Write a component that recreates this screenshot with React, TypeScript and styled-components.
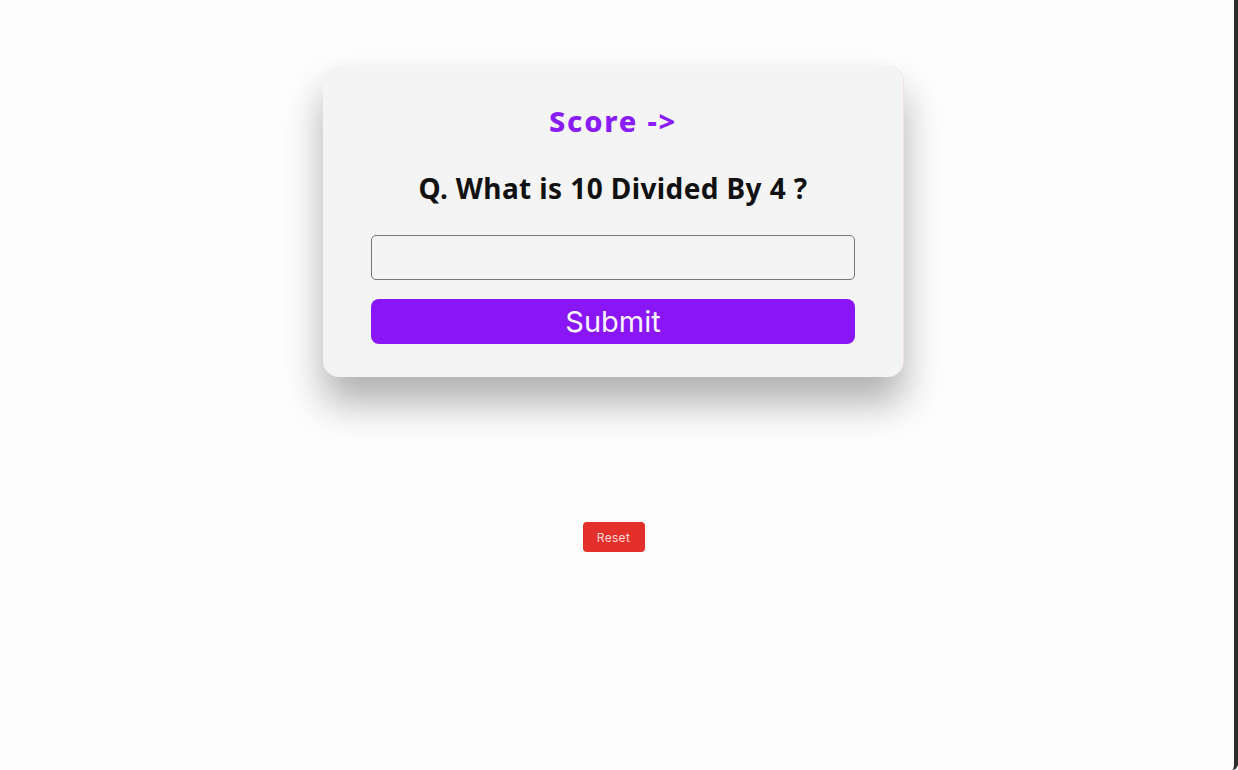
import React from "react";
import styled, { createGlobalStyle } from "styled-components";

const Global = createGlobalStyle`
  html, body { margin: 0; padding: 0; background: #fdfdfd; }
  body { font-family: "Noto Sans", sans-serif; }
`;

const Frame = styled.div`
  box-sizing: border-box;
  width: 1238px;
  height: 770px;
  background: #fdfdfd;
  border-right: 4px solid #2c2c2c;
  border-bottom-right-radius: 6px;
  padding: 65px 7px 0 0;
  display: flex;
  flex-direction: column;
  align-items: center;
`;

const Card = styled.div`
  box-sizing: border-box;
  width: 581px;
  height: 312px;
  background: #f4f4f4;
  border-radius: 16px;
  border-right: 1px solid #f1e4e8;
  box-shadow: 0 26px 38px rgba(0, 0, 0, 0.3);
  padding: 36px 48px 0 48px;
  display: flex;
  flex-direction: column;
  align-items: stretch;
`;

const Score = styled.h2`
  margin: 0;
  text-align: center;
  font-family: "Noto Sans", sans-serif;
  font-weight: 800;
  font-size: 29px;
  letter-spacing: 1.8px;
  line-height: 40px;
  color: #8a1cf5;
`;

const Question = styled.h3`
  margin: 27px 0 0 0;
  text-align: center;
  font-family: "Noto Sans", sans-serif;
  font-weight: 700;
  font-size: 28px;
  letter-spacing: 0.4px;
  line-height: 40px;
  color: #111;
`;

const Answer = styled.input`
  box-sizing: border-box;
  margin-top: 27px;
  height: 45px;
  width: 100%;
  border: 1.5px solid #767676;
  border-radius: 5px;
  background: #f4f4f4;
  outline: none;
  font-size: 20px;
`;

const Submit = styled.button`
  box-sizing: border-box;
  margin-top: 19px;
  height: 45px;
  width: 100%;
  border: none;
  border-radius: 8px;
  background: #8a16f5;
  color: #fbf3ff;
  font-family: "Inter", sans-serif;
  font-size: 29px;
  font-weight: 400;
  cursor: pointer;
`;

const Reset = styled.button`
  margin-top: 145px;
  width: 62px;
  height: 30px;
  border: none;
  border-radius: 4px;
  background: #e3302a;
  color: #f8d8d8;
  font-family: "Inter", sans-serif;
  font-size: 12px;
  letter-spacing: 0.3px;
  cursor: pointer;
`;

export default function App() {
  return (
    <>
      <Global />
      <Frame>
        <Card>
          <Score>Score -&gt;</Score>
          <Question>Q. What is 10 Divided By 4 ?</Question>
          <Answer type="text" />
          <Submit>Submit</Submit>
        </Card>
        <Reset>Reset</Reset>
      </Frame>
    </>
  );
}
